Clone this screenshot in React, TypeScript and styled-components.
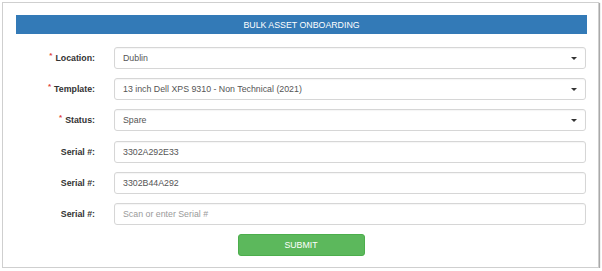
import React from 'react';
import styled, { createGlobalStyle } from 'styled-components';

const GlobalStyle = createGlobalStyle`
  html, body {
    margin: 0;
    padding: 0;
    background: #ffffff;
    font-family: "Liberation Sans", Arial, sans-serif;
  }
  * {
    box-sizing: border-box;
  }
`;

const Card = styled.div`
  margin: 2px 0 0 2px;
  width: 597px;
  height: 266px;
  border: 1px solid #cfcfcf;
  box-shadow: 1px 1px 1px #a9a9a9;
  padding: 12px 11px 0 13px;
  background: #fff;
`;

const Header = styled.div`
  height: 19px;
  background: #337ab7;
  color: #fff;
  font-size: 8.8px;
  display: flex;
  align-items: center;
  justify-content: center;
`;

const Form = styled.form`
  display: grid;
  grid-template-columns: 79px 472px;
  column-gap: 19px;
  row-gap: 9.2px;
  margin-top: 13px;
`;

const Label = styled.label`
  display: flex;
  align-items: center;
  justify-content: flex-end;
  height: 22px;
  font-size: 8.8px;
  font-weight: bold;
  color: #333;
`;

const Required = styled.span`
  color: #e0443e;
  font-size: 8px;
  margin-right: 3px;
  position: relative;
  top: -3px;
`;

const Field = styled.div`
  position: relative;
  height: 22px;
`;

const controlStyles = `
  width: 100%;
  height: 22px;
  border: 1px solid #d6d6d6;
  border-radius: 3px;
  padding: 0 8px;
  font-family: "Liberation Sans", Arial, sans-serif;
  font-size: 8.8px;
  color: #555;
  background: #fff;
  outline: none;
  box-shadow: inset 0 1px 1px rgba(0, 0, 0, 0.04);
`;

const Select = styled.select`
  ${controlStyles}
  appearance: none;
  -webkit-appearance: none;
`;

const Input = styled.input`
  ${controlStyles}
  &::placeholder {
    color: #9a9a9a;
  }
`;

const Caret = styled.svg`
  position: absolute;
  right: 9px;
  top: 9.5px;
  pointer-events: none;
`;

const ButtonRow = styled.div`
  grid-column: 1 / span 2;
  display: flex;
  justify-content: center;
`;

const SubmitButton = styled.button`
  width: 127px;
  height: 22px;
  border: 1px solid #4cae4c;
  border-radius: 3px;
  background: #5cb85c;
  color: #fff;
  font-family: "Liberation Sans", Arial, sans-serif;
  font-size: 8.8px;
  padding: 0;
`;

const selects = [
  { label: 'Location:', value: 'Dublin' },
  { label: 'Template:', value: '13 inch Dell XPS 9310 - Non Technical (2021)' },
  { label: 'Status:', value: 'Spare' },
];

const serials = ['3302A292E33', '3302B44A292', ''];

export default function App() {
  return (
    <>
      <GlobalStyle />
      <Card>
        <Header>BULK ASSET ONBOARDING</Header>
        <Form onSubmit={e => e.preventDefault()}>
          {selects.map(s => (
            <React.Fragment key={s.label}>
              <Label>
                <Required>*</Required>
                {s.label}
              </Label>
              <Field>
                <Select defaultValue={s.value}>
                  <option>{s.value}</option>
                </Select>
                <Caret width="6" height="3" viewBox="0 0 6 3">
                  <path d="M0 0 L6 0 L3 3 Z" fill="#333" />
                </Caret>
              </Field>
            </React.Fragment>
          ))}
          {serials.map((v, i) => (
            <React.Fragment key={i}>
              <Label>Serial #:</Label>
              <Field>
                <Input defaultValue={v} placeholder="Scan or enter Serial #" />
              </Field>
            </React.Fragment>
          ))}
          <ButtonRow>
            <SubmitButton type="submit">SUBMIT</SubmitButton>
          </ButtonRow>
        </Form>
      </Card>
    </>
  );
}
